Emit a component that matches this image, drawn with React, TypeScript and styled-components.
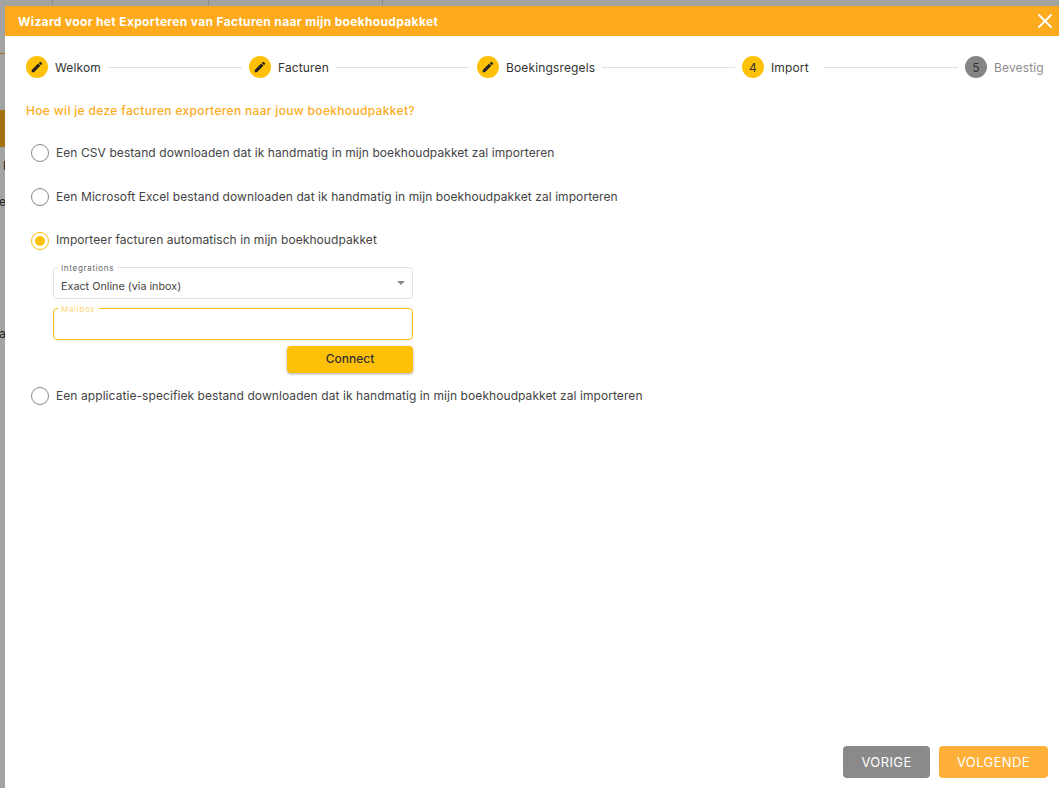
import React, { useState } from 'react'
import styled, { createGlobalStyle } from 'styled-components'
import { X } from 'lucide-react'

const FONT = `Inter, "Liberation Sans", sans-serif`
const ORANGE = '#fdab1d'
const AMBER = '#ffc107'

const GlobalStyle = createGlobalStyle`
  html, body {
    height: 100%;
    margin: 0;
    overflow: hidden;
  }

  body {
    background: #a3a3a1;
    font-family: ${FONT};
  }

  * {
    box-sizing: border-box;
  }
`

const Page = styled.div`
  height: 788px;
  overflow: hidden;
  padding: 6px 0 0 5px;
  position: relative;
  width: 1059px;
`

const BackdropLine = styled.div<{ left: number }>`
  background: #8c8c8a;
  height: 6px;
  left: ${props => props.left}px;
  position: absolute;
  top: 0;
  width: 1px;
`

const BackdropRule = styled.div`
  background: #a3730f;
  height: 1px;
  left: 0;
  position: absolute;
  top: 53px;
  width: 5px;
`

const BackdropChip = styled.div`
  background: #a3730f;
  height: 37px;
  left: 0;
  position: absolute;
  top: 110px;
  width: 5px;
`

const BackdropText = styled.span<{ top: number }>`
  color: #222;
  font-size: 12px;
  line-height: 14px;
  position: absolute;
  right: 1053px;
  top: ${props => props.top}px;
  white-space: nowrap;
`

const Dialog = styled.div`
  background: #fff;
  display: flex;
  flex-direction: column;
  height: 782px;
  position: relative;
  width: 1054px;
`

const Header = styled.div`
  align-items: center;
  background: ${ORANGE};
  color: #fff;
  display: flex;
  flex-shrink: 0;
  font-size: 12px;
  font-weight: 700;
  height: 30px;
  justify-content: space-between;
  letter-spacing: 0.34px;
  padding: 0 2px 0 13px;
`

const CloseButton = styled.button`
  align-items: center;
  background: none;
  border: none;
  color: #fff;
  display: flex;
  margin-top: -1px;
  padding: 0;
`

const Body = styled.div`
  display: flex;
  flex: 1;
  flex-direction: column;
  padding: 19px 11px 0 21px;
`

const Stepper = styled.div`
  align-items: center;
  display: flex;
  height: 24px;
`

const Step = styled.div`
  align-items: center;
  display: flex;
  flex-shrink: 0;
`

const StepCircle = styled.div<{ pending?: boolean }>`
  align-items: center;
  background: ${props => (props.pending ? '#858585' : AMBER)};
  border-radius: 50%;
  color: #333;
  display: flex;
  font-size: 12px;
  height: 22px;
  justify-content: center;
  width: 22px;
`

const StepLabel = styled.span<{ pending?: boolean; width: number }>`
  color: ${props => (props.pending ? '#8d8d8d' : '#333')};
  font-size: 12px;
  letter-spacing: 0.14px;
  margin-left: 7px;
  white-space: nowrap;
  width: ${props => props.width}px;
`

const Connector = styled.div<{ width: number; before: number; after: number }>`
  background: #e2e2e2;
  flex-shrink: 0;
  height: 1px;
  margin: 1px ${props => props.after}px 0 ${props => props.before}px;
  width: ${props => props.width}px;
`

const Question = styled.div`
  color: ${ORANGE};
  font-size: 12px;
  font-weight: 500;
  letter-spacing: 0.33px;
  line-height: 16px;
  margin-top: 24px;
`

const Options = styled.div`
  display: flex;
  flex-direction: column;
  margin-top: 12px;
  padding-left: 5px;
`

const OptionRow = styled.label<{ height: number }>`
  align-items: center;
  color: #444;
  cursor: pointer;
  display: flex;
  font-size: 12px;
  height: ${props => props.height}px;
  letter-spacing: 0.075px;
`

const OptionText = styled.span`
  padding-bottom: 2px;
`

const RadioRing = styled.span<{ checked?: boolean }>`
  align-items: center;
  border: 1px solid ${props => (props.checked ? AMBER : '#888')};
  border-radius: 50%;
  display: flex;
  flex-shrink: 0;
  height: 18px;
  justify-content: center;
  margin-right: 7px;
  width: 18px;
`

const RadioDot = styled.span`
  background: ${AMBER};
  border-radius: 50%;
  height: 10px;
  width: 10px;
`

const IntegrationForm = styled.div`
  display: flex;
  flex-direction: column;
  margin: 5px 0 0 22px;
  width: 360px;
`

const Field = styled.div<{ focused?: boolean }>`
  align-items: center;
  border: 1px solid ${props => (props.focused ? AMBER : '#e2e2e2')};
  border-radius: 4px;
  color: #444;
  display: flex;
  font-size: 10.8px;
  height: 32px;
  justify-content: space-between;
  margin-bottom: 9px;
  padding: 7px 7px 0 7px;
  position: relative;
`

const FieldLabel = styled.span<{ focused?: boolean }>`
  background: #fff;
  color: ${props => (props.focused ? '#fdd67a' : '#666')};
  font-size: 8px;
  left: 4px;
  letter-spacing: 0.7px;
  line-height: 10px;
  padding: 0 4px 0 3px;
  position: absolute;
  top: -5px;
`

const Caret = styled.span`
  border-left: 4px solid transparent;
  border-right: 4px solid transparent;
  border-top: 4px solid #888;
  margin-bottom: 8px;
`

const MailInput = styled.input`
  background: transparent;
  border: none;
  font: inherit;
  outline: none;
  width: 100%;
`

const ConnectButton = styled.button`
  align-self: flex-end;
  background: ${AMBER};
  border: none;
  border-radius: 4px;
  box-shadow: 0 1px 3px rgba(0, 0, 0, 0.35);
  color: #333;
  font-family: ${FONT};
  font-size: 12px;
  font-weight: 500;
  height: 27px;
  margin: -3px 0 12px;
  padding: 0 0 2px;
  width: 126px;
`

const Footer = styled.div`
  display: flex;
  gap: 9px;
  justify-content: flex-end;
  margin-top: auto;
  padding: 0 0 10px;
`

const FooterButton = styled.button<{ primary?: boolean }>`
  background: ${props => (props.primary ? '#ffb03a' : '#8a8a8a')};
  border: none;
  border-radius: 4px;
  color: #fff;
  font-family: ${FONT};
  font-size: 13px;
  font-weight: 400;
  height: 32px;
  letter-spacing: 0.4px;
  padding: 0;
  width: ${props => (props.primary ? 109 : 87)}px;
`

const PencilIcon = () => (
  <svg width="14" height="14" viewBox="0 0 24 24" fill="#222">
    <path d="M3 17.25V21h3.75L17.81 9.94l-3.75-3.75L3 17.25zM20.71 7.04a1 1 0 0 0 0-1.41l-2.34-2.34a1 1 0 0 0-1.41 0l-1.83 1.83 3.75 3.75 1.83-1.83z" />
  </svg>
)

const steps = [
  { label: 'Welkom', done: true, width: 46, line: { width: 134, before: 7, after: 7 } },
  { label: 'Facturen', done: true, width: 50, line: { width: 133, before: 8, after: 8 } },
  { label: 'Boekingsregels', done: true, width: 88, line: { width: 133, before: 8, after: 7 } },
  { label: 'Import', num: 4, width: 40, line: { width: 135, before: 12, after: 7 } },
  { label: 'Bevestig', num: 5, pending: true, width: 50 },
]

const exportOptions = [
  'Een CSV bestand downloaden dat ik handmatig in mijn boekhoudpakket zal importeren',
  'Een Microsoft Excel bestand downloaden dat ik handmatig in mijn boekhoudpakket zal importeren',
  'Importeer facturen automatisch in mijn boekhoudpakket',
]

const App = () => {
  const [mailbox, setMailbox] = useState('')

  return (
    <Page>
      <GlobalStyle />
      <BackdropLine left={52} />
      <BackdropLine left={208} />
      <BackdropLine left={382} />
      <BackdropRule />
      <BackdropChip />
      <BackdropText top={159}>l</BackdropText>
      <BackdropText top={195}>e</BackdropText>
      <BackdropText top={327}>Fa</BackdropText>
      <Dialog>
        <Header>
          <span>Wizard voor het Exporteren van Facturen naar mijn boekhoudpakket</span>
          <CloseButton aria-label="Sluiten">
            <X size={24} strokeWidth={1.8} />
          </CloseButton>
        </Header>
        <Body>
          <Stepper>
            {steps.map(step => (
              <React.Fragment key={step.label}>
                <Step>
                  <StepCircle pending={step.pending}>
                    {step.done ? <PencilIcon /> : step.num}
                  </StepCircle>
                  <StepLabel pending={step.pending} width={step.width}>
                    {step.label}
                  </StepLabel>
                </Step>
                {step.line && <Connector {...step.line} />}
              </React.Fragment>
            ))}
          </Stepper>
          <Question>Hoe wil je deze facturen exporteren naar jouw boekhoudpakket?</Question>
          <Options>
            {exportOptions.map((option, index) => (
              <OptionRow height={index === 2 ? 43 : 44} key={option}>
                <RadioRing checked={index === 2}>{index === 2 && <RadioDot />}</RadioRing>
                <OptionText>{option}</OptionText>
              </OptionRow>
            ))}
            <IntegrationForm>
              <Field>
                <FieldLabel>Integrations</FieldLabel>
                Exact Online (via inbox)
                <Caret />
              </Field>
              <Field focused>
                <FieldLabel focused>Mailbox</FieldLabel>
                <MailInput onChange={e => setMailbox(e.target.value)} value={mailbox} />
              </Field>
              <ConnectButton>Connect</ConnectButton>
            </IntegrationForm>
            <OptionRow height={22}>
              <RadioRing />
              <OptionText>
                Een applicatie-specifiek bestand downloaden dat ik handmatig in mijn boekhoudpakket zal importeren
              </OptionText>
            </OptionRow>
          </Options>
          <Footer>
            <FooterButton>VORIGE</FooterButton>
            <FooterButton primary>VOLGENDE</FooterButton>
          </Footer>
        </Body>
      </Dialog>
    </Page>
  )
}

export default App
